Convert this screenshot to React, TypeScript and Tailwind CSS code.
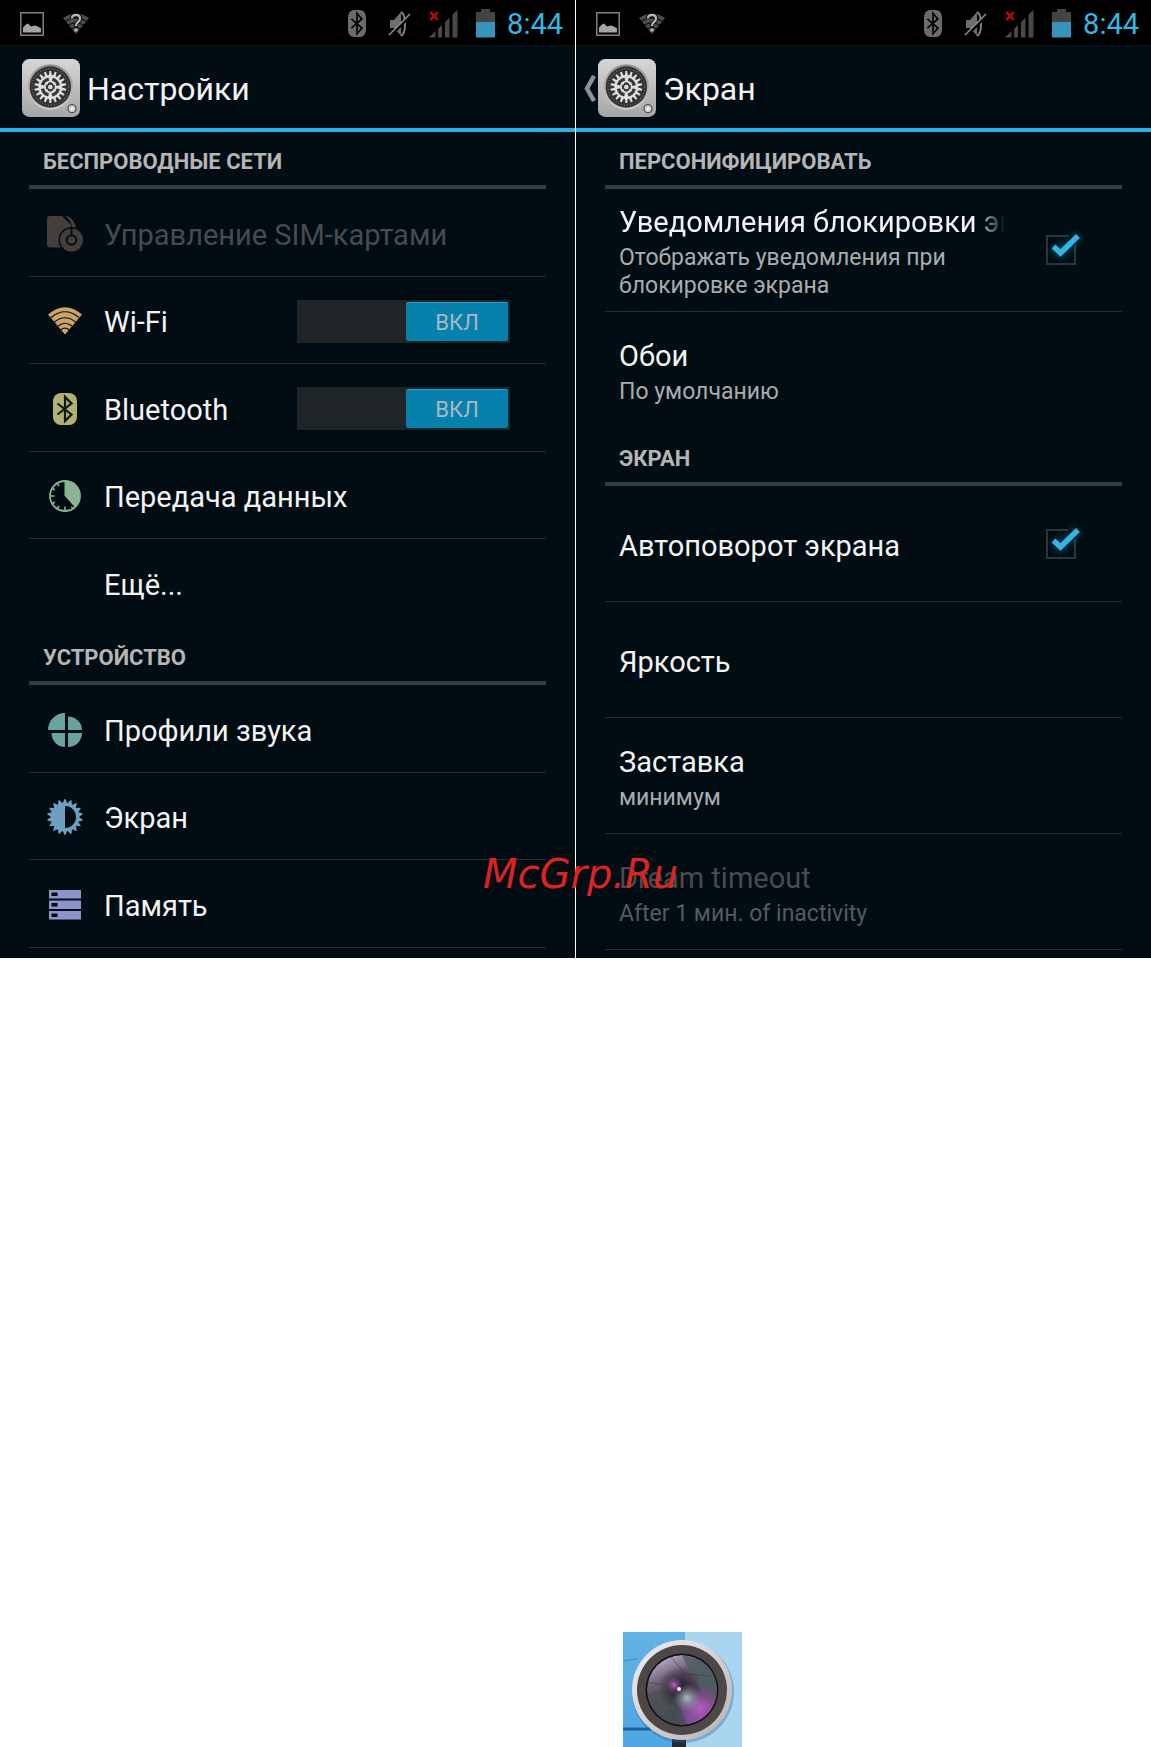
import { useState } from "react";
import type { ReactNode } from "react";

// points of a toothed ring around (cx, cy)
const gear = (cx: number, cy: number, outer: number, inner: number, teeth: number, flat: number, base: number) => {
  const pts: string[] = [];
  const step = (Math.PI * 2) / teeth;
  for (let i = 0; i < teeth; i++) {
    const a = i * step - Math.PI / 2;
    [
      [a - step * base, inner],
      [a - step * flat, outer],
      [a + step * flat, outer],
      [a + step * base, inner],
    ].forEach(([t, r]) => pts.push(`${(cx + Math.cos(t) * r).toFixed(2)},${(cy + Math.sin(t) * r).toFixed(2)}`));
  }
  return pts.join(" ");
};

const PictureIcon = () => (
  <svg width="24" height="24" viewBox="0 0 24 24" fill="none">
    <rect x="0.8" y="0.8" width="22.4" height="22.4" stroke="#8c8c8c" strokeWidth="1.4" />
    <path d="M3 20.500v-5l3-3 2-1 3 3 4-1 3 1 3 2v4z" fill="#a6a6a6" />
  </svg>
);

const WifiUnknownIcon = () => (
  <svg width="26" height="22" viewBox="0 0 26 22" fill="none">
    <path d="M0 5Q13-4 26 5L13 21z" fill="#4d4d4d" />
    <path d="M2 8.5Q13 1 24 8.5M5 12.5Q13 7 21 12.5M8 16.5Q13 12.500 18 16.500" stroke="#000" strokeWidth="1" />
    <path d="M9 5.500Q9 2 13 2t4 3.500q0 2-2 3.500t-2 4.500" stroke="#000" strokeWidth="4" />
    <path d="M9 5.500Q9 2 13 2t4 3.500q0 2-2 3.500t-2 4" stroke="#b5b5b5" strokeWidth="2.4" />
    <rect x="11.600" y="15.500" width="2.800" height="3" fill="#b5b5b5" />
  </svg>
);

const BluetoothIcon = ({ color, mark, width, height }: { color: string; mark: string; width: number; height: number }) => (
  <svg width={width} height={height} viewBox="0 0 24 32" fill="none" preserveAspectRatio="none">
    <rect width="24" height="32" rx="8" fill={color} />
    <path d="M4.500 10.500L18.500 21.500L12 28V4L18.500 10.500L4.500 21.500" stroke={mark} strokeWidth="2.2" />
  </svg>
);

const MuteIcon = () => (
  <svg width="23" height="26" viewBox="0 0 23 26" fill="none">
    <path d="M2 9h4l7-8v24l-7-8H2z" fill="#6e6e6e" />
    <path d="M13 1q4 2 4 12t-4 12" stroke="#808080" strokeWidth="2" />
    <path d="M2 25L23 4" stroke="#000" strokeWidth="3" />
    <path d="M1 24L22 3" stroke="#8a8a8a" strokeWidth="1.700" />
  </svg>
);

const SignalIcon = () => (
  <svg width="29" height="28" viewBox="0 0 29 28" fill="none">
    <path d="M0 27.500l6.500-6.500v6.500zM9 19l4-4v12.500H9zM16 12l4.500-4.500v20H16zM23.500 4.500L28.500 0v27.500h-5z" fill="#484848" />
    <path d="M1 2l8 8M9 2L1 10" stroke="#c4070b" strokeWidth="2.200" />
  </svg>
);

const BatteryIcon = () => (
  <svg width="19" height="29" viewBox="0 0 19 29">
    <path d="M0 3h5V0h9v3h5v11H0z" fill="#444" />
    <rect y="13" width="19" height="15.500" fill="#3594ba" />
  </svg>
);

const SettingsLogo = () => (
  <svg className="shrink-0" width="58" height="58" viewBox="0 0 174 174" fill="none">
    <defs>
      <linearGradient id="plate" x1="0" y1="0" x2="0" y2="1">
        <stop offset="0" stopColor="#d6d6d6" />
        <stop offset="1" stopColor="#a6a6a6" />
      </linearGradient>
      <linearGradient id="rim" x1="0" y1="0" x2="0" y2="1">
        <stop offset="0" stopColor="#8f8f8f" />
        <stop offset="1" stopColor="#cfcfcf" />
      </linearGradient>
    </defs>
    <rect width="174" height="174" rx="22" fill="url(#plate)" />
    <circle cx="85" cy="84" r="68" fill="url(#rim)" />
    <circle cx="85" cy="84" r="62" fill="#333" />
    <circle cx="85" cy="84" r="55" stroke="#6a6a6a" strokeWidth="4" strokeDasharray="3 6" />
    <polygon points={gear(85, 84, 48, 36, 18, 0.17, 0.32)} fill="#dedede" />
    <circle cx="85" cy="84" r="24" stroke="#383838" strokeWidth="10" strokeDasharray="27 10.700" strokeDashoffset="-5.350" />
    <circle cx="85" cy="84" r="14" fill="#4a4a4a" />
    <path d="M71 70l28 28M99 70l-28 28" stroke="#d8d8d8" strokeWidth="6" />
    <circle cx="85" cy="84" r="9" fill="#ddd" stroke="#333" strokeWidth="4" />
    <circle cx="150" cy="149" r="12" fill="#cfcfcf" stroke="#555" strokeWidth="4" />
    <circle cx="150" cy="149" r="5" fill="#f0f0f0" />
  </svg>
);

const SimIcon = () => (
  <svg width="36" height="36" viewBox="0 0 36 36" fill="none">
    <path d="M3 0h12l9 9v22.500H3q-3 0-3-3V3q0-3 3-3z" fill="#453e3b" />
    <path d="M18.500 0h2q8 5 8.500 12h-4q0-6-6.500-12z" fill="#453e3b" />
    <circle cx="24.500" cy="24" r="13" fill="#010d12" />
    <circle cx="24.500" cy="24" r="11.500" fill="#453e3b" />
    <circle cx="24.500" cy="24" r="4.800" stroke="#010d12" strokeWidth="2" />
    <path d="M24.500 11v8.500" stroke="#010d12" strokeWidth="2" />
  </svg>
);

const WifiIcon = () => (
  <svg width="34" height="28" viewBox="0 0 34 28" fill="none">
    <path d="M0 7.500Q17-7 34 7.500L17 27.500z" fill="#cda368" />
    <path d="M3 10.500Q17-1 31 10.500M6.500 15Q17 6.500 27.500 15M10 19Q17 13.500 24 19M13 22.700q4-3 8 0" stroke="#010d12" strokeWidth="1.200" />
  </svg>
);

const DataIcon = () => (
  <svg width="32" height="32" viewBox="0 0 32 32" fill="none">
    <circle cx="16" cy="16" r="15" stroke="#8bb394" strokeWidth="1.800" />
    <path d="M15.500 1Q31 1 31 16q0 7-5 11.500L15.500 15.500z" fill="#8bb394" />
    <path d="M2 16h3.500M16 30v-3.500M8.500 3.500l1.500 2.500M3.500 8.500L6 10M3.500 23.500L6 22M8.500 28.500L10 26M23.500 28.500L22.500 26.500" stroke="#8bb394" strokeWidth="1.500" />
  </svg>
);

const ProfilesIcon = () => (
  <svg width="34" height="34" viewBox="0 0 34 34" fill="#6aa39e">
    <path d="M17 0v17H0A17 17 0 0 1 17 0zM20 3.500A14 13.500 0 0 1 34 17H20zM3.500 20H17v14A13.500 14 0 0 1 3.500 20zM20 20h14a14 14 0 0 1-14 14z" />
  </svg>
);

const DisplayIcon = () => (
  <svg width="36" height="36" viewBox="0 0 36 36">
    <polygon points={gear(18, 18, 18, 14.3, 18, 0.06, 0.46)} fill="#6f9fc0" />
    <path d="M18 7a11 11 0 0 1 0 22z" fill="#010d12" />
  </svg>
);

const StorageIcon = () => (
  <svg width="32" height="30" viewBox="0 0 32 30">
    {[0, 10.500, 21].map((y) => (
      <g key={y}>
        <rect y={y} width="32" height="8.500" fill="#9093c9" />
        <rect x="2.500" y={y + 2.500} width="6" height="3.500" fill="#010d12" />
      </g>
    ))}
  </svg>
);

const StatusBar = () => (
  <div className="flex h-[45px] items-center justify-between bg-black pt-0.5 pr-3 pl-5">
    <div className="flex items-center gap-[19px]">
      <PictureIcon />
      <WifiUnknownIcon />
    </div>
    <div className="flex items-center">
      <div className="flex items-center gap-[18px] pr-3">
        <span className="pr-1">
          <BluetoothIcon color="#6b6b6b" mark="#000" width={18} height={27} />
        </span>
        <MuteIcon />
        <SignalIcon />
        <BatteryIcon />
      </div>
      <span className="text-[29px] leading-8 text-[#33b5e5]">8:44</span>
    </div>
  </div>
);

const Header = ({ title, back }: { title: string; back?: boolean }) => (
  <header className="flex h-[87px] items-center border-t border-b-4 border-t-[#0a1418] border-b-[#2cafe2] pt-0.5 pl-2">
    <div className="w-[14px]">
      {back && (
        <button type="button" aria-label="Назад" className="block">
          <svg width="12" height="27" viewBox="0 0 12 27" fill="none">
            <path d="M10 1L3 13.500L10 26" stroke="#8b9194" strokeWidth="4.500" />
          </svg>
        </button>
      )}
    </div>
    <SettingsLogo />
    <h1 className="pt-0.5 pl-[7px] text-[32px] leading-10 text-[#f3f3f3]">{title}</h1>
  </header>
);

const SectionTitle = ({ children }: { children: ReactNode }) => (
  <h2 className="flex h-[57px] items-center border-b-4 border-[#313e44] pt-1.5 pl-[14px] text-[22px] leading-7 font-bold text-[#b5b5b5]">
    {children}
  </h2>
);

const Toggle = ({ label }: { label: string }) => {
  const [on, setOn] = useState(true);
  return (
    <button
      type="button"
      role="switch"
      aria-checked={on}
      aria-label={label}
      onClick={() => setOn(!on)}
      className={`flex h-[43px] w-[213px] bg-[#1f2427] p-0.5 ${on ? "justify-end" : "justify-start"}`}
    >
      <span className="flex h-full w-[102px] items-center justify-center rounded-xs border-t border-[#2b9cc6] bg-[#0680ad] pt-0.5 text-[22px] leading-7 text-[#a9b8be]">
        {on ? "ВКЛ" : "ВЫКЛ"}
      </span>
    </button>
  );
};

type ItemProps = { label: string; icon?: ReactNode; toggle?: boolean; disabled?: boolean; last?: boolean };

const Item = ({ label, icon, toggle, disabled, last }: ItemProps) => (
  <li className={`flex items-center pt-0.5 pr-9 pl-[18px] odd:h-[88px] even:h-[87px] ${last ? "" : "border-b border-[#222d32]"}`}>
    <span className="flex w-9 shrink-0 justify-center">{icon}</span>
    <a href="#" className={`flex-1 pt-0.5 pl-[21px] text-[29px] leading-9 whitespace-nowrap ${disabled ? "text-[#484b4c]" : "text-[#f3f3f3]"}`}>
      {label}
    </a>
    {toggle && <Toggle label={label} />}
  </li>
);

const Check = ({ id }: { id: string }) => (
  <span className="relative block h-[30px] w-[30px] shrink-0">
    <input id={id} type="checkbox" defaultChecked className="peer block h-full w-full appearance-none border-2 border-[#2b3539]" />
    <svg className="pointer-events-none invisible absolute -top-2 left-0 peer-checked:visible" width="42" height="40" viewBox="0 0 42 40" fill="none">
      <path d="M7.500 19.500l7 6.500L32 9" stroke="#1797c9" strokeWidth="10" opacity="0.350" className="blur-[3px]" />
      <path d="M24 15L33 6" stroke="#031a24" strokeWidth="11" />
      <path d="M7.500 19.500l7 6.500L32 9" stroke="#35b4e6" strokeWidth="5.500" />
    </svg>
  </span>
);

type PrefProps = { id?: string; title: string; summary?: string; disabled?: boolean; tall?: boolean; last?: boolean };

const Preference = ({ id, title, summary, disabled, tall, last }: PrefProps) => {
  const text = (
    <>
      <span
        className={`block overflow-hidden text-[29px] leading-9 whitespace-nowrap ${disabled ? "text-[#484b4c]" : "text-[#f3f3f3]"} ${
          tall ? "[mask-image:linear-gradient(to_right,black_92%,transparent)]" : ""
        }`}
      >
        {title}
      </span>
      {summary && <span className={`mt-1 block text-[23px] leading-7 ${disabled ? "text-[#555b5d]" : "text-[#a9adaf]"}`}>{summary}</span>}
    </>
  );
  return (
    <li className={`flex items-center pr-[46px] pl-[14px] ${tall ? "h-[123px]" : "h-[116px]"} ${last ? "" : "border-b border-[#222d32]"}`}>
      {id ? (
        <>
          <label htmlFor={id} className="min-w-0 flex-1 pt-1 pr-[41px]">
            {text}
          </label>
          <Check id={id} />
        </>
      ) : (
        <a href="#" className="min-w-0 flex-1 pt-1">
          {text}
        </a>
      )}
    </li>
  );
};

const CameraTile = () => (
  <svg className="block" width="119" height="115" viewBox="0 0 119 115" fill="none">
    <defs>
      <linearGradient id="sky" x1="0" y1="0" x2="0" y2="1">
        <stop offset="0" stopColor="#63b2e4" />
        <stop offset="1" stopColor="#4ea6e4" />
      </linearGradient>
      <linearGradient id="metal" x1="0" y1="0" x2="1" y2="1">
        <stop offset="0" stopColor="#f0eff2" />
        <stop offset="1" stopColor="#b5b2b4" />
      </linearGradient>
      <linearGradient id="glass" x1="0.200" y1="0" x2="0.700" y2="1">
        <stop offset="0" stopColor="#c9b6da" />
        <stop offset="0.300" stopColor="#6b5f72" />
        <stop offset="0.600" stopColor="#49474e" />
        <stop offset="1" stopColor="#8450a8" />
      </linearGradient>
      <radialGradient id="violet">
        <stop offset="0" stopColor="#b763b9" />
        <stop offset="1" stopColor="#7a3c92" stopOpacity="0" />
      </radialGradient>
      <radialGradient id="dark">
        <stop offset="0" stopColor="#1c1220" />
        <stop offset="1" stopColor="#2c202e" stopOpacity="0" />
      </radialGradient>
      <radialGradient id="shine">
        <stop offset="0" stopColor="#a9bcc6" />
        <stop offset="1" stopColor="#8998a0" stopOpacity="0" />
      </radialGradient>
      <clipPath id="lens">
        <circle cx="59" cy="58" r="35" />
      </clipPath>
    </defs>
    <rect width="119" height="115" fill="#a9d5f1" />
    <rect width="62" height="115" fill="url(#sky)" />
    <path d="M0 29l14-2" stroke="#4995cc" strokeWidth="1.500" />
    <path d="M0 97h28" stroke="#20629c" strokeWidth="3" />
    <rect x="49" y="104" width="14" height="11" fill="#202a36" />
    <circle cx="60" cy="60" r="51" fill="#315e80" opacity="0.350" />
    <circle cx="59" cy="58" r="50" fill="url(#metal)" />
    <circle cx="59" cy="58" r="45" fill="#4e4747" />
    <circle cx="59" cy="58" r="36.500" fill="#141014" />
    <g clipPath="url(#lens)">
      <circle cx="59" cy="58" r="35" fill="url(#glass)" />
      <path d="M58 22l38 12v42L76 56z" fill="#4f6062" opacity="0.800" />
      <path d="M24 62l30-7 4 18-20 14z" fill="#4b5351" opacity="0.800" />
      <path d="M38 87l20-14 6 22-20 1z" fill="#3c4c49" opacity="0.800" />
      <path d="M44 20l18 22 26 2M22 50l32 5M34 88l22-16" stroke="#37383d" strokeWidth="1" opacity="0.500" />
      <circle cx="77" cy="76" r="26" fill="url(#violet)" />
      <circle cx="57" cy="56" r="22" fill="url(#dark)" />
      <circle cx="64" cy="66" r="14" fill="url(#shine)" />
      <circle cx="51" cy="53" r="9" fill="url(#violet)" />
      <circle cx="56" cy="57" r="2" fill="#f4ecef" />
    </g>
  </svg>
);

const App = () => {
  return (
    <div className="flex min-h-screen flex-col bg-white font-[Roboto,sans-serif]">
      <div className="relative grid grid-cols-2 gap-px">
        <section className="bg-[#010d12] pb-[10px]">
          <StatusBar />
          <Header title="Настройки" />
          <div className="px-[29px]">
            <SectionTitle>БЕСПРОВОДНЫЕ СЕТИ</SectionTitle>
            <ul>
              <Item label="Управление SIM-картами" icon={<SimIcon />} disabled />
              <Item label="Wi-Fi" icon={<WifiIcon />} toggle />
              <Item label="Bluetooth" icon={<BluetoothIcon color="#b1b077" mark="#10170f" width={24} height={32} />} toggle />
              <Item label="Передача данных" icon={<DataIcon />} />
              <Item label="Ещё..." last />
            </ul>
            <div className="pt-px">
              <SectionTitle>УСТРОЙСТВО</SectionTitle>
            </div>
            <ul>
              <Item label="Профили звука" icon={<ProfilesIcon />} />
              <Item label="Экран" icon={<DisplayIcon />} />
              <Item label="Память" icon={<StorageIcon />} />
            </ul>
          </div>
        </section>

        <section className="bg-[#010d12]">
          <StatusBar />
          <Header title="Экран" back />
          <div className="px-[29px]">
            <SectionTitle>ПЕРСОНИФИЦИРОВАТЬ</SectionTitle>
            <ul>
              <Preference id="lock" title="Уведомления блокировки экрана" summary="Отображать уведомления при блокировке экрана" tall />
              <Preference title="Обои" summary="По умолчанию" last />
            </ul>
            <div className="pt-px">
              <SectionTitle>ЭКРАН</SectionTitle>
            </div>
            <ul>
              <Preference id="rotate" title="Автоповорот экрана" />
              <Preference title="Яркость" />
              <Preference title="Заставка" summary="минимум" />
              <Preference title="Dream timeout" summary="After 1 мин. of inactivity" disabled />
            </ul>
          </div>
        </section>

        <p className="pointer-events-none absolute bottom-15 left-[483px] font-['DejaVu_Sans',sans-serif] text-[40px] leading-12 text-[#dd2222] italic">
          McGrp.Ru
        </p>
      </div>

      <div className="mt-auto grid grid-cols-2 gap-px">
        <div className="col-start-2 pl-[47px]">
          <CameraTile />
        </div>
      </div>
    </div>
  );
};

export default App;
